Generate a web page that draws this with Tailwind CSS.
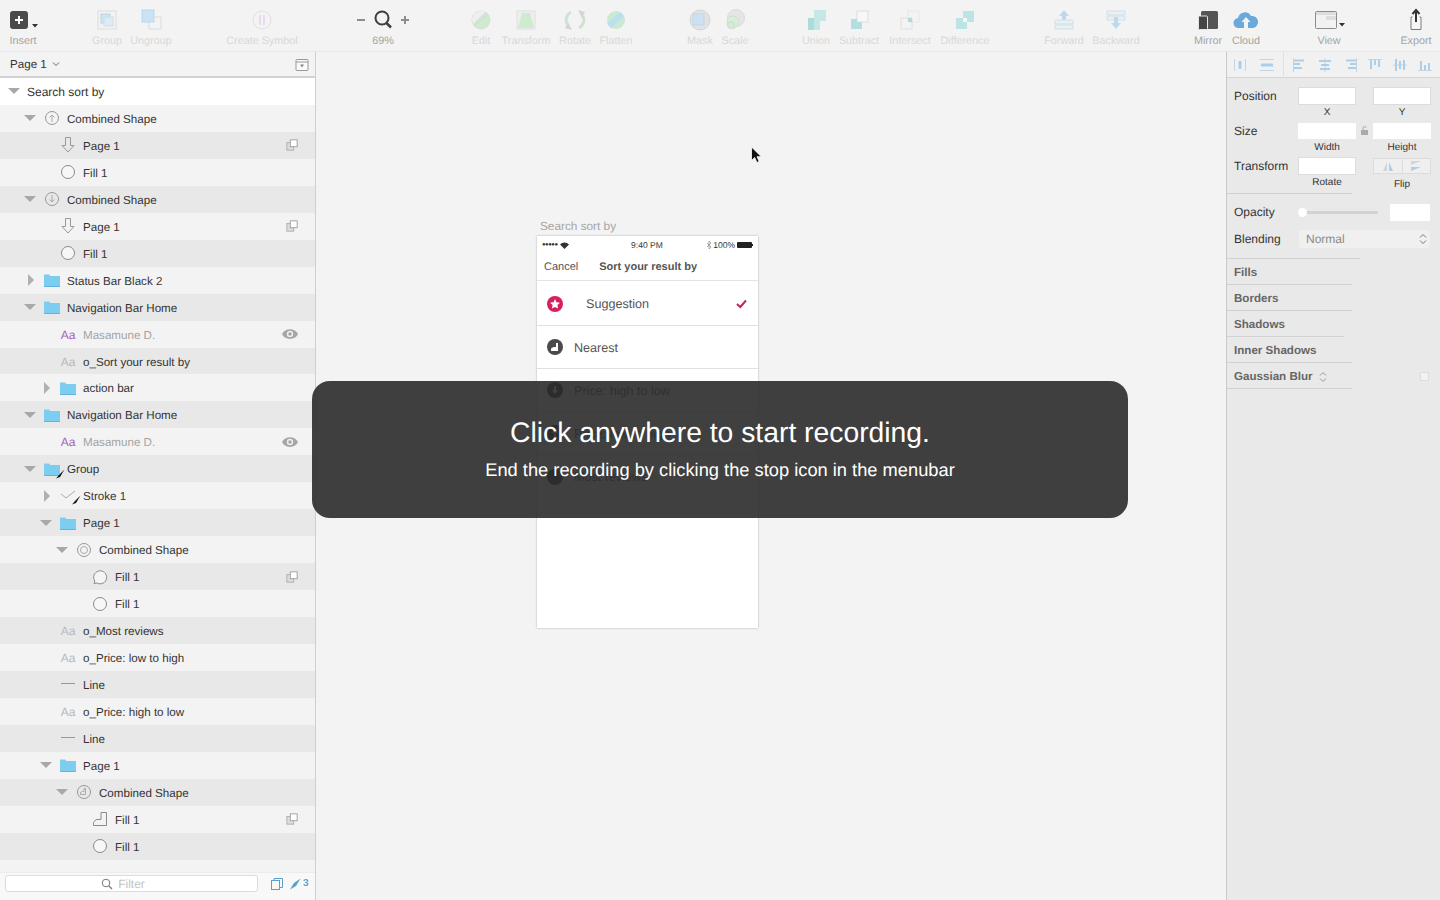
<!doctype html>
<html><head><meta charset="utf-8"><script src="https://cdn.jsdelivr.net/npm/@tailwindcss/browser@4"></script></head>
<body class="m-0">
<svg class="hidden" width="0" height="0">
<symbol id="tri-d" viewBox="0 0 12 12"><path d="M0 3h12L6 9z" fill="#a8a8a8"/></symbol>
<symbol id="tri-r" viewBox="0 0 12 12"><path d="M4 0v12l6-6z" fill="#b0b0b0"/></symbol>
<symbol id="folder" viewBox="0 0 20 16"><path d="M2 2.500h5l1.500 1.500H18v11H2z" fill="#7ccdf0"/><path d="M2 14h16v1H2z" fill="#5fb4dc"/></symbol>
<symbol id="circ" viewBox="0 0 20 16"><circle cx="10" cy="8" r="6.500" fill="#f7f7f7" stroke="#8a8a8a"/></symbol>
<symbol id="arrow" viewBox="0 0 20 18"><path d="M7.500 1.500h5v8h3.500L10 16 4 9.500h3.500z" fill="none" stroke="#999"/></symbol>
<symbol id="dup" viewBox="0 0 14 14"><rect x="1" y="4" width="8" height="9" fill="#ddd" stroke="#aaa"/><rect x="5" y="1" width="8" height="8" fill="#fff" stroke="#999"/></symbol>
<symbol id="eye" viewBox="0 0 16 12"><path d="M0 6c3-6.500 13-6.500 16 0-3 6.500-13 6.500-16 0z" fill="#a5a5a5"/><circle cx="8" cy="6" r="3.200" fill="#eee"/><circle cx="8" cy="6" r="1.700" fill="#a5a5a5"/></symbol>
<symbol id="pen" viewBox="0 0 10 10"><path d="M9.500 0.500 4 6 1 9.500 5 8z" fill="#111"/></symbol>
</svg>
<div class="relative flex h-[900px] w-[1440px] flex-col overflow-hidden bg-[#f3f3f3] font-['Liberation_Sans',Arial,sans-serif] text-[12px] text-[#333] [text-rendering:geometricPrecision]">

<!-- toolbar -->
<header class="flex h-[52px] shrink-0 border-b border-[#e7e7e7] bg-[#f3f3f3] pt-[8px] text-[10.800px] leading-3 text-[#d8d8d8]">
  <div class="flex w-[46px] flex-col items-center"><svg class="h-6 w-9" viewBox="0 0 36 24"><rect x="5" y="3" width="18" height="18" rx="3" fill="#4b4b4b"/><path d="M14 8v8M10 12h8" stroke="#fff" stroke-width="2"/><path d="M27 16h6l-3 3.500z" fill="#333"/></svg><span class="mt-[3px] text-[#a3a3a3]">Insert</span></div>
  <div class="ml-[39px] flex w-[44px] flex-col items-center"><svg class="h-6 w-7 opacity-70" viewBox="0 0 28 24"><rect x="5" y="3" width="18" height="18" fill="none" stroke="#d4d4d4"/><rect x="8" y="6" width="9" height="9" fill="#bfe0f5" stroke="#9cc7e3"/><rect x="11" y="9" width="9" height="9" fill="#d3e9f7" stroke="#c4d4de"/></svg><span class="mt-[3px]">Group</span></div>
  <div class="flex w-[44px] flex-col items-center"><svg class="h-6 w-7 opacity-70" viewBox="0 0 28 24"><rect x="5" y="2" width="12" height="12" fill="#b9dcf4" stroke="#a3cdea"/><path d="M17 9h7v12h-12v-7" fill="none" stroke="#d2d2d2"/></svg><span class="mt-[3px]">Ungroup</span></div>
  <div class="ml-[49px] flex w-[80px] flex-col items-center"><svg class="h-6 w-7 opacity-70" viewBox="0 0 28 24"><circle cx="14" cy="12" r="9" fill="#f7f2f8" stroke="#d8d8d8"/><path d="M12 7v10M16 7v10" stroke="#e3d3e8" stroke-width="2"/></svg><span class="mt-[3px]">Create Symbol</span></div>
  <div class="ml-[51px] flex w-[60px] flex-col items-center"><svg class="h-6 w-[60px]" viewBox="0 0 60 24"><path d="M4 12h8M48 12h8M52 8v8" stroke="#8d8d8d" stroke-width="2"/><circle cx="29" cy="10" r="6.500" fill="none" stroke="#3e3e3e" stroke-width="2"/><path d="M33.500 15 38 19.500" stroke="#3e3e3e" stroke-width="2.500"/></svg><span class="mt-[3px] text-[#a3a3a3]">69%</span></div>
  <div class="ml-[48px] flex w-[40px] flex-col items-center"><svg class="h-6 w-7 opacity-70" viewBox="0 0 28 24"><circle cx="14" cy="12" r="9" fill="#bfe8c2" stroke="#d2d2d2"/><path d="M5 12a9 9 0 0 1 9-9 9 9 0 0 1 4 1L6 16z" fill="#eee"/><path d="M7 18 21 6" stroke="#cfcfcf" stroke-width="1.500"/></svg><span class="mt-[3px]">Edit</span></div>
  <div class="flex w-[50px] flex-col items-center"><svg class="h-6 w-7 opacity-70" viewBox="0 0 28 24"><rect x="5" y="3" width="18" height="18" fill="#ececec" stroke="#d8d8d8"/><path d="M10 5h8l4 15H6z" fill="#bfe8c2"/></svg><span class="mt-[3px]">Transform</span></div>
  <div class="flex w-[48px] flex-col items-center"><svg class="h-6 w-7 opacity-70" viewBox="0 0 28 24"><path d="M10 4a9 9 0 0 0-4 12M18 20a9 9 0 0 0 4-12" fill="none" stroke="#bfdcc2" stroke-width="3"/><path d="M17 2l7 2-3 6zM11 22l-7-2 3-6z" fill="#c7c7c7"/></svg><span class="mt-[3px]">Rotate</span></div>
  <div class="flex w-[34px] flex-col items-center"><svg class="h-6 w-7 opacity-70" viewBox="0 0 28 24"><circle cx="14" cy="12" r="9" fill="#b9e6c3"/><path d="M7 18 20 6" stroke="#a6d6ef" stroke-width="6"/></svg><span class="mt-[3px]">Flatten</span></div>
  <div class="ml-[50px] flex w-[34px] flex-col items-center"><svg class="h-6 w-7 opacity-70" viewBox="0 0 28 24"><circle cx="14" cy="12" r="10" fill="#dcdcdc" stroke="#c9c9c9"/><rect x="7" y="6" width="11" height="11" fill="#bcdcf3" stroke="#a7cbe4"/></svg><span class="mt-[3px]">Mask</span></div>
  <div class="flex w-[36px] flex-col items-center"><svg class="h-6 w-7 opacity-70" viewBox="0 0 28 24"><circle cx="15" cy="10" r="8.500" fill="#e0e0e0" stroke="#d0d0d0"/><circle cx="12" cy="14" r="6" fill="#cdeccf" stroke="#c0d8c2"/><circle cx="10" cy="17" r="3.500" fill="#c6e8cb" stroke="#b8d5bc"/></svg><span class="mt-[3px]">Scale</span></div>
  <div class="ml-[41px] flex w-[44px] flex-col items-center"><svg class="h-6 w-7 opacity-70" viewBox="0 0 28 24"><path d="M12 2h12v11h-6v9H6V10h6z" fill="#b2e4e2"/><path d="M6 10h6v12H6z" fill="#8fd1d3"/></svg><span class="mt-[3px]">Union</span></div>
  <div class="flex w-[42px] flex-col items-center"><svg class="h-6 w-7 opacity-70" viewBox="0 0 28 24"><rect x="12" y="3" width="11" height="11" fill="#fafafa" stroke="#d6d6d6"/><path d="M6 11h6v3h5v7H6z" fill="#9ad7d8"/></svg><span class="mt-[3px]">Subtract</span></div>
  <div class="flex w-[60px] flex-col items-center"><svg class="h-6 w-7 opacity-70" viewBox="0 0 28 24"><rect x="12" y="3" width="11" height="11" fill="none" stroke="#dadada" stroke-dasharray="2 1"/><rect x="5" y="10" width="11" height="11" fill="none" stroke="#dadada"/><rect x="12" y="10" width="4" height="4" fill="#8fd1d3"/></svg><span class="mt-[3px]">Intersect</span></div>
  <div class="flex w-[50px] flex-col items-center"><svg class="h-6 w-7 opacity-70" viewBox="0 0 28 24"><path d="M12 3h11v11h-7v7H5V10h7z" fill="#a6dfe0"/><rect x="12" y="10" width="4" height="4" fill="#f7f7f7"/></svg><span class="mt-[3px]">Difference</span></div>
  <div class="ml-[50px] flex w-[48px] flex-col items-center"><svg class="h-6 w-7 opacity-70" viewBox="0 0 28 24"><path d="M14 2l5 6h-3v6h-4V8H9z" fill="#a9cfeb"/><path d="M5 12h18v4H5zM5 17h18v4H5z" fill="#e6eef4" stroke="#c3d7e6"/></svg><span class="mt-[3px]">Forward</span></div>
  <div class="flex w-[56px] flex-col items-center"><svg class="h-6 w-7 opacity-70" viewBox="0 0 28 24"><path d="M5 3h18v4H5zM5 8h18v4H5z" fill="#e6eef4" stroke="#c3d7e6"/><path d="M14 21l5-6h-3V9h-4v6H9z" fill="#a9cfeb"/></svg><span class="mt-[3px]">Backward</span></div>
  <div class="ml-[44px] flex w-[40px] flex-col items-center"><svg class="h-6 w-7" viewBox="0 0 28 24"><rect x="7" y="3" width="17" height="18" rx="1.500" fill="#555"/><rect x="4.500" y="8" width="9" height="13.500" rx="1" fill="#444" stroke="#e5e5e5"/></svg><span class="mt-[3px] text-[#a3a3a3]">Mirror</span></div>
  <div class="flex w-[36px] flex-col items-center"><svg class="h-6 w-7" viewBox="0 0 28 24"><path d="M7 20a5 5 0 0 1-1-10 7 7 0 0 1 13-2 6 6 0 0 1 2 12z" fill="#6aa9d9"/><path d="M14 9l4.500 5H16v6h-4v-6H9.500z" fill="#f3f3f3"/></svg><span class="mt-[3px] text-[#a3a3a3]">Cloud</span></div>
  <div class="ml-[40px] flex w-[50px] flex-col items-center"><svg class="h-6 w-[50px]" viewBox="0 0 50 24"><rect x="11.500" y="3.500" width="21" height="17" rx="1" fill="#f2f2f2" stroke="#8c8c8c"/><path d="M12 4h20v3H12zM22 8h10v4H22z" fill="#ddd"/><path d="M35 15h6l-3 3.500z" fill="#333"/></svg><span class="mt-[3px] text-[#a3a3a3]">View</span></div>
  <div class="ml-[38px] flex w-[48px] flex-col items-center"><svg class="h-6 w-7" viewBox="0 0 28 24"><path d="M10.500 9H9v12.500h10V9h-1.500" fill="#f7f7f7" stroke="#7c7c7c"/><path d="M14 14V3M10.500 6 14 2l3.500 4" fill="none" stroke="#333" stroke-width="2"/></svg><span class="mt-[3px] text-[#a3a3a3]">Export</span></div>
</header>

<div class="flex min-h-0 flex-1">
  <!-- layers -->
  <aside class="flex w-[316px] shrink-0 flex-col border-r border-[#cfcfcf] bg-[#f3f3f3]">
    <div class="flex h-[26px] shrink-0 items-center justify-between border-b-2 border-[#d2d2d2] pl-[10px] pr-[6px]">
      <div class="flex items-center gap-[5px]"><span class="translate-y-px text-[11.600px]">Page 1</span><svg class="h-2 w-2" viewBox="0 0 8 8"><path d="M1 2.500 4 5.500 7 2.500" fill="none" stroke="#666"/></svg></div>
      <svg class="h-[14px] w-[14px] translate-y-px" viewBox="0 0 14 14"><rect x="1" y="1.500" width="12" height="11" rx="1" fill="#fafafa" stroke="#999"/><path d="M1 4h12" stroke="#999"/><path d="M5 6.500h4L7 9.500z" fill="#888"/></svg>
    </div>
    <div class="min-h-0 flex-1 overflow-hidden text-[11.600px] leading-[27px] [&>div>span]:translate-y-px">
      <div class="flex h-[26.960px] items-center bg-white pl-[8px] text-[12px]"><svg class="h-3 w-3"><use href="#tri-d"/></svg><span class="ml-[7px]">Search sort by</span></div>

      <div class="flex h-[26.960px] items-center pl-[24px]"><svg class="h-3 w-3"><use href="#tri-d"/></svg><svg class="ml-[6px] h-4 w-5" viewBox="0 0 20 16"><circle cx="10" cy="8" r="6.500" fill="none" stroke="#999"/><path d="M10 12V5M7.500 7.500 10 5l2.500 2.500" fill="none" stroke="#aaa"/></svg><span class="ml-[5px]">Combined Shape</span></div>
      <div class="flex h-[26.960px] items-center bg-[#e8e8e8] pl-[40px]"><span class="w-3"></span><svg class="ml-[6px] h-[18px] w-5"><use href="#arrow"/></svg><span class="ml-[5px]">Page 1</span><svg class="ml-auto mr-[17px] h-3 w-3"><use href="#dup"/></svg></div>
      <div class="flex h-[26.960px] items-center pl-[40px]"><span class="w-3"></span><svg class="ml-[6px] h-4 w-5"><use href="#circ"/></svg><span class="ml-[5px]">Fill 1</span></div>
      <div class="flex h-[26.960px] items-center bg-[#e8e8e8] pl-[24px]"><svg class="h-3 w-3"><use href="#tri-d"/></svg><svg class="ml-[6px] h-4 w-5" viewBox="0 0 20 16"><circle cx="10" cy="8" r="6.500" fill="none" stroke="#999"/><path d="M10 4v7M7.500 8.500 10 11l2.500-2.500" fill="none" stroke="#aaa"/></svg><span class="ml-[5px]">Combined Shape</span></div>
      <div class="flex h-[26.960px] items-center pl-[40px]"><span class="w-3"></span><svg class="ml-[6px] h-[18px] w-5"><use href="#arrow"/></svg><span class="ml-[5px]">Page 1</span><svg class="ml-auto mr-[17px] h-3 w-3"><use href="#dup"/></svg></div>
      <div class="flex h-[26.960px] items-center bg-[#e8e8e8] pl-[40px]"><span class="w-3"></span><svg class="ml-[6px] h-4 w-5"><use href="#circ"/></svg><span class="ml-[5px]">Fill 1</span></div>
      <div class="flex h-[26.960px] items-center pl-[24px]"><svg class="h-3 w-3"><use href="#tri-r"/></svg><svg class="ml-[6px] h-4 w-5"><use href="#folder"/></svg><span class="ml-[5px]">Status Bar Black 2</span></div>
      <div class="flex h-[26.960px] items-center bg-[#e8e8e8] pl-[24px]"><svg class="h-3 w-3"><use href="#tri-d"/></svg><svg class="ml-[6px] h-4 w-5"><use href="#folder"/></svg><span class="ml-[5px]">Navigation Bar Home</span></div>
      <div class="flex h-[26.960px] items-center pl-[40px]"><span class="w-3"></span><span class="ml-[6px] w-5 text-center text-[12px] text-[#a761b8]">Aa</span><span class="ml-[5px] text-[#a3a3a3]">Masamune D.</span><svg class="ml-auto mr-[17px] h-3 w-4"><use href="#eye"/></svg></div>
      <div class="flex h-[26.960px] items-center bg-[#e8e8e8] pl-[40px]"><span class="w-3"></span><span class="ml-[6px] w-5 text-center text-[12px] text-[#b8b8b8]">Aa</span><span class="ml-[5px]">o_Sort your result by</span></div>
      <div class="flex h-[26.960px] items-center pl-[40px]"><svg class="h-3 w-3"><use href="#tri-r"/></svg><svg class="ml-[6px] h-4 w-5"><use href="#folder"/></svg><span class="ml-[5px]">action bar</span></div>
      <div class="flex h-[26.960px] items-center bg-[#e8e8e8] pl-[24px]"><svg class="h-3 w-3"><use href="#tri-d"/></svg><svg class="ml-[6px] h-4 w-5"><use href="#folder"/></svg><span class="ml-[5px]">Navigation Bar Home</span></div>
      <div class="flex h-[26.960px] items-center pl-[40px]"><span class="w-3"></span><span class="ml-[6px] w-5 text-center text-[12px] text-[#a761b8]">Aa</span><span class="ml-[5px] text-[#a3a3a3]">Masamune D.</span><svg class="ml-auto mr-[17px] h-3 w-4"><use href="#eye"/></svg></div>
      <div class="relative flex h-[26.960px] items-center bg-[#e8e8e8] pl-[24px]"><svg class="h-3 w-3"><use href="#tri-d"/></svg><svg class="ml-[6px] h-4 w-5"><use href="#folder"/></svg><span class="ml-[5px]">Group</span><svg class="absolute left-[55px] top-[14px] h-[10px] w-[10px]"><use href="#pen"/></svg></div>
      <div class="relative flex h-[26.960px] items-center pl-[40px]"><svg class="h-3 w-3"><use href="#tri-r"/></svg><svg class="ml-[6px] h-4 w-5" viewBox="0 0 20 16"><path d="M3 6l5 4 9-7" fill="none" stroke="#aaa"/></svg><span class="ml-[5px]">Stroke 1</span><svg class="absolute left-[71px] top-[13px] h-[10px] w-[10px]"><use href="#pen"/></svg></div>
      <div class="flex h-[26.960px] items-center bg-[#e8e8e8] pl-[40px]"><svg class="h-3 w-3"><use href="#tri-d"/></svg><svg class="ml-[6px] h-4 w-5"><use href="#folder"/></svg><span class="ml-[5px]">Page 1</span></div>
      <div class="flex h-[26.960px] items-center pl-[56px]"><svg class="h-3 w-3"><use href="#tri-d"/></svg><svg class="ml-[6px] h-4 w-5" viewBox="0 0 20 16"><circle cx="10" cy="8" r="6.500" fill="none" stroke="#999"/><circle cx="10" cy="8" r="3.500" fill="none" stroke="#aaa"/></svg><span class="ml-[5px]">Combined Shape</span></div>
      <div class="flex h-[26.960px] items-center bg-[#e8e8e8] pl-[72px]"><span class="w-3"></span><svg class="ml-[6px] h-4 w-5" viewBox="0 0 20 16"><path d="M4 14.500l.8-2.500A6.500 6.500 0 1 1 7 14z" fill="#f5f5f5" stroke="#8a8a8a"/></svg><span class="ml-[5px]">Fill 1</span><svg class="ml-auto mr-[17px] h-3 w-3"><use href="#dup"/></svg></div>
      <div class="flex h-[26.960px] items-center pl-[72px]"><span class="w-3"></span><svg class="ml-[6px] h-4 w-5"><use href="#circ"/></svg><span class="ml-[5px]">Fill 1</span></div>
      <div class="flex h-[26.960px] items-center bg-[#e8e8e8] pl-[40px]"><span class="w-3"></span><span class="ml-[6px] w-5 text-center text-[12px] text-[#b8b8b8]">Aa</span><span class="ml-[5px]">o_Most reviews</span></div>
      <div class="flex h-[26.960px] items-center pl-[40px]"><span class="w-3"></span><span class="ml-[6px] w-5 text-center text-[12px] text-[#b8b8b8]">Aa</span><span class="ml-[5px]">o_Price: low to high</span></div>
      <div class="flex h-[26.960px] items-center bg-[#e8e8e8] pl-[40px]"><span class="w-3"></span><svg class="ml-[6px] h-4 w-5" viewBox="0 0 20 16"><path d="M3 7.500h14" stroke="#999"/></svg><span class="ml-[5px]">Line</span></div>
      <div class="flex h-[26.960px] items-center pl-[40px]"><span class="w-3"></span><span class="ml-[6px] w-5 text-center text-[12px] text-[#b8b8b8]">Aa</span><span class="ml-[5px]">o_Price: high to low</span></div>
      <div class="flex h-[26.960px] items-center bg-[#e8e8e8] pl-[40px]"><span class="w-3"></span><svg class="ml-[6px] h-4 w-5" viewBox="0 0 20 16"><path d="M3 7.500h14" stroke="#999"/></svg><span class="ml-[5px]">Line</span></div>
      <div class="flex h-[26.960px] items-center pl-[40px]"><svg class="h-3 w-3"><use href="#tri-d"/></svg><svg class="ml-[6px] h-4 w-5"><use href="#folder"/></svg><span class="ml-[5px]">Page 1</span></div>
      <div class="flex h-[26.960px] items-center bg-[#e8e8e8] pl-[56px]"><svg class="h-3 w-3"><use href="#tri-d"/></svg><svg class="ml-[6px] h-4 w-5" viewBox="0 0 20 16"><circle cx="10" cy="8" r="6.500" fill="none" stroke="#999"/><path d="M11.500 4.500v6H6.500v-2l2-1h1.500v-3z" fill="none" stroke="#aaa"/></svg><span class="ml-[5px]">Combined Shape</span></div>
      <div class="flex h-[26.960px] items-center pl-[72px]"><span class="w-3"></span><svg class="ml-[6px] h-4 w-5" viewBox="0 0 20 16"><path d="M16.500 1.500v13h-13v-3l2.500-3h5v-7z" fill="none" stroke="#8a8a8a"/></svg><span class="ml-[5px]">Fill 1</span><svg class="ml-auto mr-[17px] h-3 w-3"><use href="#dup"/></svg></div>
      <div class="flex h-[26.960px] items-center bg-[#e8e8e8] pl-[72px]"><span class="w-3"></span><svg class="ml-[6px] h-4 w-5"><use href="#circ"/></svg><span class="ml-[5px]">Fill 1</span></div>
    </div>
    <div class="flex h-[28px] shrink-0 items-center border-t border-[#ececec] bg-[#f8f8f8] pb-[6px] pl-[5px]">
      <div class="flex h-[17px] w-[253px] items-center justify-center gap-[5px] rounded-[3px] border border-[#dcdcdc] bg-white pr-[17px] text-[12px] text-[#c4c4c4]"><svg class="h-3 w-3" viewBox="0 0 12 12"><circle cx="5" cy="5" r="3.800" fill="none" stroke="#777"/><path d="M8 8l3 3" stroke="#777" stroke-width="1.300"/></svg><span>Filter</span></div>
      <svg class="ml-[13px] h-3 w-3" viewBox="0 0 12 12"><rect x=".5" y="2.500" width="8" height="9" fill="none" stroke="#5b9fd0"/><path d="M3 2.500V.5h8.500v9h-3" fill="none" stroke="#5b9fd0"/></svg>
      <svg class="ml-[6px] h-3 w-3" viewBox="0 0 12 12"><path d="M11.500.5 5 5 1 11.500 7 8z" fill="#5b9fd0"/></svg>
      <span class="ml-[2px] text-[10px] font-bold text-[#5b9fd0]">3</span>
    </div>
  </aside>

  <!-- canvas -->
  <main class="relative min-w-0 flex-1 bg-[#f3f3f3]">
    <div class="absolute left-[221px] top-[167px] w-[221px]">
      <div class="h-[17px] pl-[3px] pt-[1px] text-[11.800px] leading-[13px] text-[#a5a5a5]">Search sort by</div>
      <div class="h-[392px] bg-white text-[12.600px] text-[#555] shadow-[0_0_2px_rgba(0,0,0,0.3)]">
        <div class="flex h-[19px] items-center justify-between px-[5px] pb-[1px] text-[8.500px] text-[#333]"><span class="flex items-center gap-[2px]"><span class="text-[6px] leading-none tracking-[-0.5px]">●●●●●</span><svg class="h-[7px] w-[9px]" viewBox="0 0 9 7"><path d="M0 2.500a6 6 0 0 1 9 0L4.500 7z" fill="#333"/></svg></span><span class="ml-[18px]">9:40 PM</span><span class="flex items-center gap-[2px]"><svg class="h-2 w-[4px]" viewBox="0 0 4 8"><path d="M0 2l4 4-2 2V0l2 2-4 4" fill="none" stroke="#777" stroke-width=".6"/></svg>100%<svg class="h-[6px] w-4" viewBox="0 0 16 6"><rect width="15" height="6" rx="1" fill="#222"/><rect x="15" y="2" width="1" height="2" fill="#222"/></svg></span></div>
        <div class="flex h-[26px] items-center border-b border-[#e4e4e4] pb-[1px] pl-[7px]"><span class="text-[11px]">Cancel</span><span class="ml-[21px] text-[11px] font-bold">Sort your result by</span></div>
        <div class="flex h-[45px] items-center border-b border-[#e0e0e0] pl-[10px] pr-[11px] pt-[2px]"><svg class="h-4 w-4" viewBox="0 0 16 16"><circle cx="8" cy="8" r="8" fill="#d81f5c"/><path d="M8 3l1.500 3.300 3.500.4-2.600 2.400.7 3.500L8 11l-3.100 1.600.7-3.500L3 6.700l3.500-.4z" fill="#fff"/></svg><span class="ml-[23px]">Suggestion</span><svg class="ml-auto h-[10px] w-[11px]" viewBox="0 0 11 10"><path d="M1 5l3.300 3L10 1.500" fill="none" stroke="#c92357" stroke-width="2"/></svg></div>
        <div class="flex h-[43px] items-center border-b border-[#e0e0e0] pl-[10px]"><svg class="h-4 w-4" viewBox="0 0 16 16"><circle cx="8" cy="8" r="8" fill="#4a4a4a"/><path d="M11 4v8H4V9.500L6.500 8H9V4z" fill="#fff"/></svg><span class="ml-[11px] translate-y-px">Nearest</span></div>
        <div class="flex h-[43px] items-center border-b border-[#e0e0e0] pl-[10px]"><svg class="h-4 w-4" viewBox="0 0 16 16"><circle cx="8" cy="8" r="8" fill="#333"/><path d="M8 12 5 8h2V4h2v4h2z" fill="#fff"/></svg><span class="ml-[11px] translate-y-px">Price: high to low</span></div>
        <div class="flex h-[43px] items-center border-b border-[#e0e0e0] pl-[10px]"><svg class="h-4 w-4" viewBox="0 0 16 16"><circle cx="8" cy="8" r="8" fill="#333"/><path d="M8 4 5 8h2v4h2V8h2z" fill="#fff"/></svg><span class="ml-[11px] translate-y-px">Price: low to high</span></div>
        <div class="flex h-[43px] items-center pl-[10px]"><svg class="h-4 w-4" viewBox="0 0 16 16"><circle cx="8" cy="8" r="8" fill="#333"/></svg><span class="ml-[11px] translate-y-px">Most reviews</span></div>
      </div>
    </div>
    <svg class="absolute left-[434px] top-[94px] h-[18px] w-[12px]" viewBox="0 0 12 18"><path d="M1.500 1v13.500l3.200-3 2.200 5 2.300-1-2.200-4.800h4.300z" fill="#111" stroke="#fff" stroke-width=".8"/></svg>
  </main>

  <!-- inspector -->
  <aside class="w-[214px] shrink-0 border-l border-[#c9c9c9] bg-[#e9e9e9]">
    <div class="flex h-[26px] items-center border-b border-[#d5d5d5] bg-[#f1f1f1] pl-[6px]">
      <svg class="h-[14px] w-[14px]" viewBox="0 0 14 14"><path d="M1.500 1v12M12.500 1v12" stroke="#c6d4df"/><rect x="5.500" y="3" width="3" height="8" fill="#a9cfeb"/></svg>
      <svg class="ml-[13px] h-[14px] w-[14px]" viewBox="0 0 14 14"><path d="M0 1.500h14M0 12.500h14" stroke="#c6d4df"/><rect x="1" y="5.500" width="12" height="3" fill="#a9cfeb"/></svg>
      <span class="ml-[9px] h-[26px] w-px bg-[#e0e0e0]"></span>
      <svg class="ml-[8px] h-[14px] w-[14px]" viewBox="0 0 14 14"><path d="M1.500 0v14" stroke="#c6d4df"/><path d="M2 2.500h10M2 6h6M2 10h8" stroke="#a9cfeb" stroke-width="2"/></svg>
      <svg class="ml-[12px] h-[14px] w-[14px]" viewBox="0 0 14 14"><path d="M7 0v14" stroke="#c6d4df"/><path d="M1 3h12M3 7h8M2 11h10" stroke="#a9cfeb" stroke-width="2"/></svg>
      <svg class="ml-[12px] h-[14px] w-[14px]" viewBox="0 0 14 14"><path d="M12.500 0v14" stroke="#c6d4df"/><path d="M2 2.500h10M6 6h6M4 10h8" stroke="#a9cfeb" stroke-width="2"/></svg>
      <svg class="ml-[10px] h-[14px] w-[14px]" viewBox="0 0 14 14"><path d="M0 1.500h14" stroke="#c6d4df"/><path d="M3 2v9M7 2v5M11 2v7" stroke="#a9cfeb" stroke-width="2"/></svg>
      <svg class="ml-[11px] h-[14px] w-[14px]" viewBox="0 0 14 14"><path d="M0 7h14" stroke="#c6d4df"/><path d="M3 1v12M7 3v8M11 2v10" stroke="#a9cfeb" stroke-width="2"/></svg>
      <svg class="ml-[11px] h-[14px] w-[14px]" viewBox="0 0 14 14"><path d="M0 12.500h14" stroke="#c6d4df"/><path d="M3 3v9M7 7v5M11 5v7" stroke="#a9cfeb" stroke-width="2"/></svg>
    </div>
    <div class="pl-[7px] pt-[9px]">
      <div class="flex h-[35px]"><span class="w-[64px] pt-[1px] leading-4">Position</span><div class="w-[58px] text-center text-[10px] leading-[16px]"><div class="h-[18px] border border-[#dcdcdc] bg-white"></div>X</div><div class="ml-[17px] w-[58px] text-center text-[10px] leading-[16px]"><div class="h-[18px] border border-[#dcdcdc] bg-white"></div>Y</div></div>
      <div class="flex h-[35px]"><span class="w-[64px] pt-[1px] leading-4">Size</span><div class="w-[58px] pt-[1px] text-center text-[10px] leading-[18px]"><div class="h-[16px] bg-white"></div>Width</div><div class="flex w-[17px] justify-center pt-[4px]"><svg class="h-[9px] w-[7px]" viewBox="0 0 7 9"><path d="M2 4V2a1.500 1.500 0 0 1 3 0" fill="none" stroke="#aaa"/><rect y="4" width="7" height="5" fill="#aaa"/></svg></div><div class="w-[58px] pt-[1px] text-center text-[10px] leading-[18px]"><div class="h-[16px] bg-white"></div>Height</div></div>
      <div class="flex h-[35px]"><span class="w-[64px] pt-[1px] leading-4">Transform</span><div class="w-[58px] text-center text-[10px] leading-[16px]"><div class="h-[18px] border border-[#dcdcdc] bg-white"></div>Rotate</div><div class="ml-[17px] w-[58px] pt-[1px] text-center text-[10px] leading-[22px]"><div class="flex h-[16px] border border-[#dcdcdc] bg-[#efefef]"><div class="flex flex-1 items-center justify-center border-r border-[#dcdcdc]"><svg class="h-[10px] w-3" viewBox="0 0 12 10"><path d="M5 1v9H1z" fill="#d5d5d5"/><path d="M7 1v9h4z" fill="#a9cfeb"/></svg></div><div class="flex flex-1 items-center justify-center"><svg class="h-[10px] w-3" viewBox="0 0 12 10"><path d="M1 0h10L1 4z" fill="#d5d5d5"/><path d="M1 6h10L1 10z" fill="#a9cfeb"/></svg></div></div>Flip</div></div>
    </div>
    <div class="w-[125px] border-b border-[#d2d2d2] pt-[1px]"></div>
    <div class="mt-[9px] flex h-[18px] items-center pl-[7px]"><span class="w-[64px]">Opacity</span><div class="relative h-[3px] w-[80px] rounded-full bg-[#d2d2d2]"><span class="absolute -top-[3px] left-0 h-[9px] w-[9px] rounded-full bg-white"></span></div><div class="ml-[12px] h-[17px] w-[40px] bg-white"></div></div>
    <div class="mt-[9px] flex h-[18px] items-center pl-[7px]"><span class="w-[65px]">Blending</span><div class="flex h-[18px] w-[131px] items-center justify-between rounded-[3px] bg-[#f0f0f0] pl-[7px] pr-[3px] text-[#8a8a8a]"><span>Normal</span><svg class="h-3 w-2" viewBox="0 0 8 12"><path d="M1 4.500 4 1.500 7 4.500M1 7.500l3 3 3-3" fill="none" stroke="#777"/></svg></div></div>
    <div class="w-[133px] border-b border-[#d2d2d2] pt-[10px]"></div>
    <div class="flex h-[26px] w-[125px] items-center border-b border-[#d2d2d2] pl-[7px] pt-[2px] text-[11.600px] font-bold text-[#666]">Fills</div>
    <div class="flex h-[26px] w-[125px] items-center border-b border-[#d2d2d2] pl-[7px] pt-[2px] text-[11.600px] font-bold text-[#666]">Borders</div>
    <div class="flex h-[26px] w-[117px] items-center border-b border-[#d2d2d2] pl-[7px] pt-[2px] text-[11.600px] font-bold text-[#666]">Shadows</div>
    <div class="flex h-[26px] w-[125px] items-center border-b border-[#d2d2d2] pl-[7px] pt-[2px] text-[11.600px] font-bold text-[#666]">Inner Shadows</div>
    <div class="relative flex h-[26px] w-[125px] items-center gap-[6px] border-b border-[#d2d2d2] pl-[7px] pt-[2px] text-[11.600px] font-bold text-[#666]">Gaussian Blur<svg class="h-3 w-2" viewBox="0 0 8 12"><path d="M1 4.500 4 1.500 7 4.500M1 7.500l3 3 3-3" fill="none" stroke="#999"/></svg><span class="absolute left-[193px] top-[9px] h-[9px] w-[9px] border border-[#ddd] bg-[#f2f2f2]"></span></div>
  </aside>
</div>

<!-- overlay -->
<div class="absolute left-[312px] top-[381px] flex h-[137px] w-[816px] flex-col items-center rounded-[18px] bg-[#2b2b2b]/90 pt-[34px] text-white">
  <div class="text-[28.300px] leading-[34px]">Click anywhere to start recording.</div>
  <div class="mt-[10px] text-[18.300px] leading-[22px]">End the recording by clicking the stop icon in the menubar</div>
</div>
</div>
</body></html>
